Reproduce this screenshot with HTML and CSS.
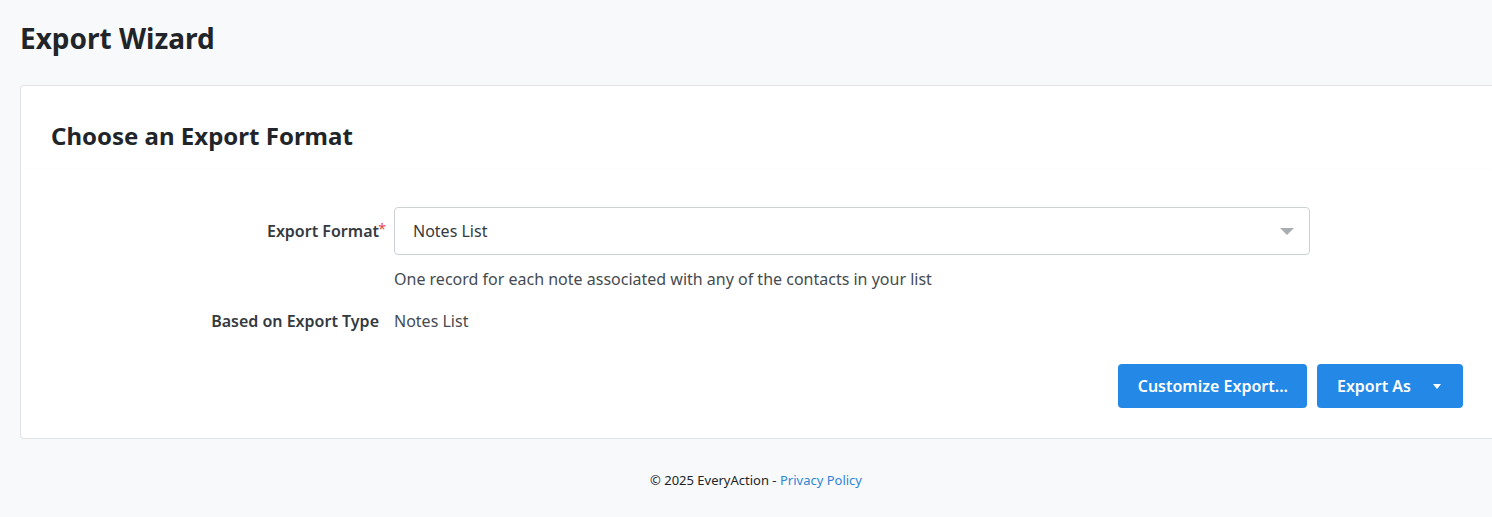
FILE: index.html
```html
<!DOCTYPE html>
<html lang="en">
  <head>
    <meta charset="UTF-8" />
    <meta name="viewport" content="width=device-width, initial-scale=1.0" />
    <title>Export Wizard</title>
    <link rel="stylesheet" href="styles.css">
  </head>
  <body>
    <div class="page">
      <h1 class="page-title">Export Wizard</h1>

      <div class="card">
        <div class="card-header">
          <h2 class="card-title">Choose an Export Format</h2>
        </div>

        <div class="card-body">
          <!-- Export Format -->
          <div class="form-row">
            <label class="label required">Export Format</label>
            <div class="field">
              <div class="select">
                <span>Notes List</span>
                <span class="caret"></span>
              </div>
              <div class="help">One record for each note associated with any of the contacts in your list</div>
            </div>
          </div>

          <!-- Based on -->
          <div class="form-row">
            <span class="label">Based on Export Type</span>
            <div class="field">
              <span class="value">Notes List</span>
            </div>
          </div>

          <div class="actions">
            <button class="btn">Customize Export...</button>
            <button class="btn btn-split">Export As <span class="btn-caret"></span></button>
          </div>
        </div>
      </div>

      <footer class="footer">
        &copy; 2025 EveryAction - <a href="#">Privacy Policy</a>
      </footer>
    </div>
  </body>
</html>
```

FILE: styles.css
```css
body {
  margin: 0;
  background: #f8f9fb;
  font-family: "Noto Sans", "Open Sans", Arial, sans-serif;
  color: #212529;
}

.page {
  padding: 0 0 0 20px;
}

.page-title {
  margin: 0;
  padding: 19px 0 0 0;
  height: 85px;
  box-sizing: border-box;
  font-size: 28px;
  font-weight: 700;
  line-height: 38px;
}

.card {
  background: #fff;
  border: 1px solid #e1e3e6;
  border-right: none;
  border-radius: 4px 0 0 4px;
}

.card-header {
  padding: 34px 30px 16px 30px;
  box-shadow: 0 1px 1px -1px rgba(0, 0, 0, 0.06);
}

.card-title {
  margin: 0;
  font-size: 24px;
  font-weight: 700;
  line-height: 32px;
}

.card-body {
  padding: 39px 29px 30px 30px;
}

.form-row {
  display: flex;
  gap: 15px;
  margin-bottom: 18px;
}

.label {
  width: 328px;
  flex-shrink: 0;
  text-align: right;
  font-size: 16px;
  font-weight: 600;
  color: #343a40;
  line-height: 24px;
  position: relative;
}

.form-row:first-child .label {
  padding-top: 12px;
}

.required::after {
  content: "*";
  color: #e0474c;
  position: absolute;
  right: -7px;
  top: 10px;
  font-size: 14px;
  font-weight: 400;
}

.field {
  flex: 1;
}

.select {
  width: 916px;
  height: 48px;
  box-sizing: border-box;
  border: 1px solid #ced2d6;
  border-radius: 4px;
  padding: 0 18px;
  display: flex;
  align-items: center;
  justify-content: space-between;
  font-size: 16px;
  color: #343a40;
}

.caret {
  width: 0;
  height: 0;
  border-left: 7px solid transparent;
  border-right: 7px solid transparent;
  border-top: 7px solid #a9adb2;
  margin-right: -3px;
}

.help {
  margin-top: 12px;
  font-size: 16px;
  line-height: 24px;
  color: #454b51;
}

.value {
  font-size: 16px;
  line-height: 24px;
  color: #454b51;
}

.actions {
  display: flex;
  justify-content: flex-end;
  gap: 10px;
  margin-top: 31px;
}

.btn {
  height: 44px;
  padding: 0 19px 0 20px;
  background: #2388e6;
  color: #fff;
  border: none;
  border-radius: 4px;
  font-family: inherit;
  font-size: 16px;
  font-weight: 600;
  cursor: pointer;
}

.btn-split {
  display: flex;
  align-items: center;
  padding-right: 22px;
}

.btn-caret {
  width: 0;
  height: 0;
  margin-left: 22px;
  border-left: 4px solid transparent;
  border-right: 4px solid transparent;
  border-top: 5px solid #fff;
}

.footer {
  text-align: center;
  font-size: 13px;
  color: #212529;
  padding: 32px 0 20px 0;
}

.footer a {
  color: #2f86d6;
  text-decoration: none;
}
```
